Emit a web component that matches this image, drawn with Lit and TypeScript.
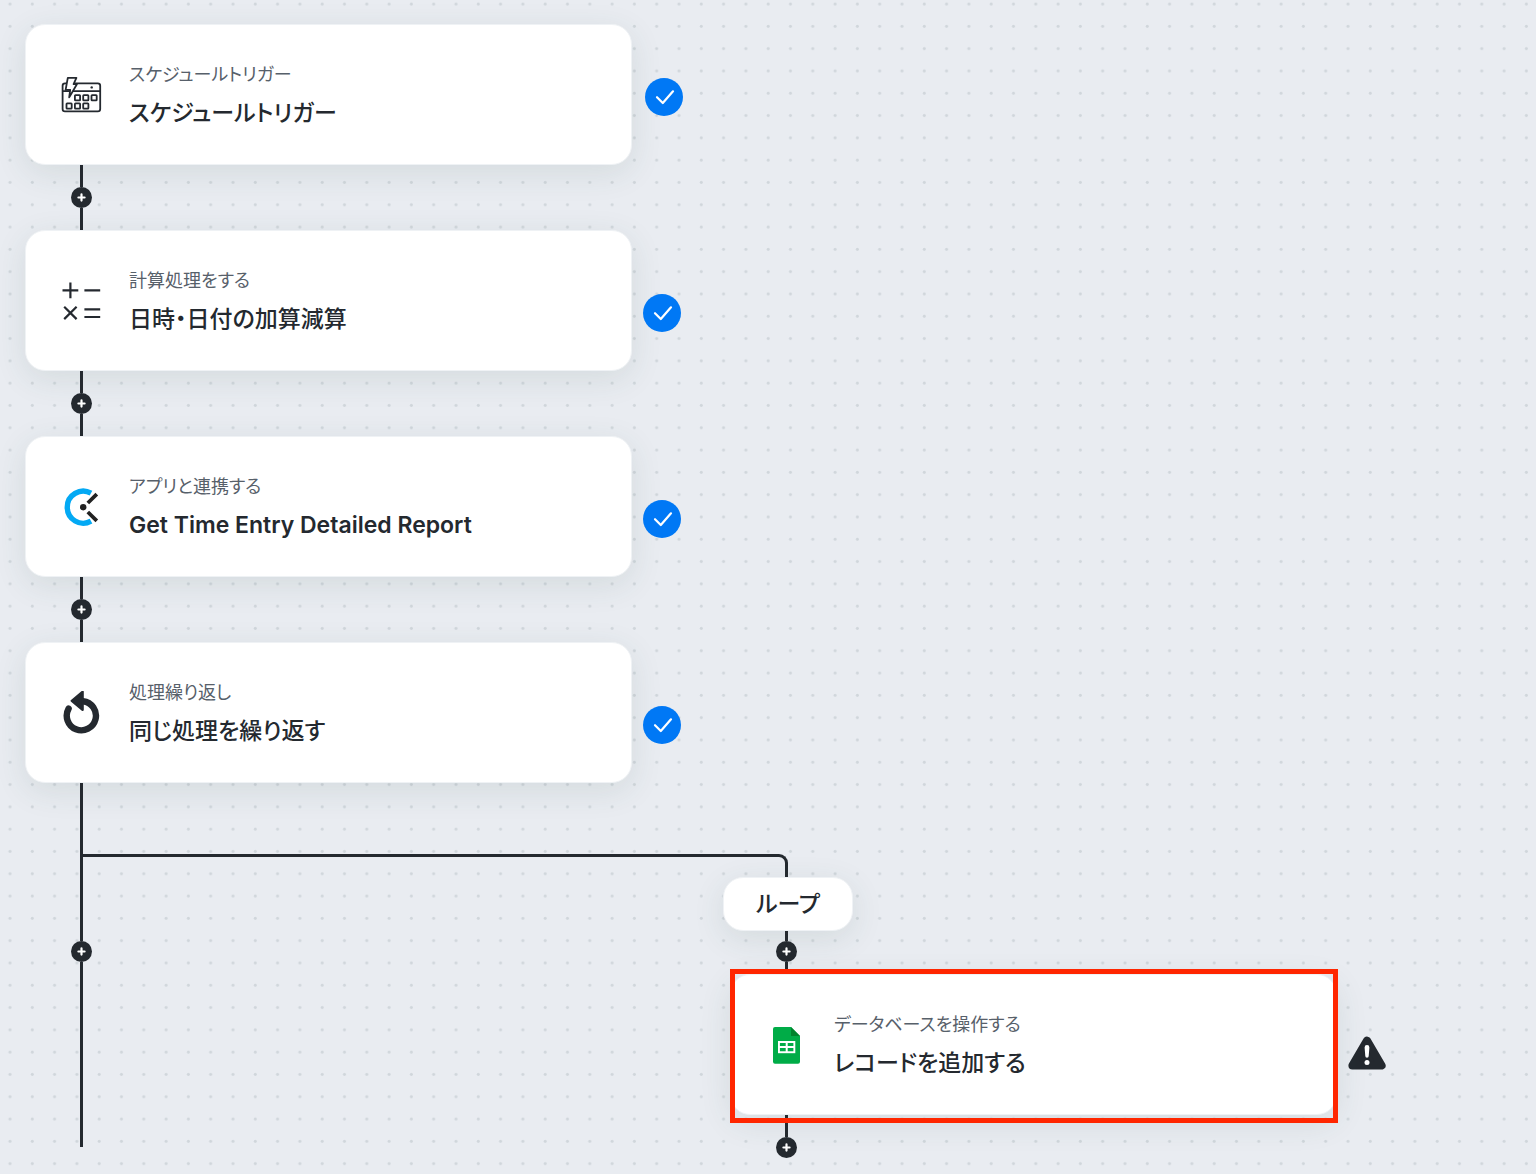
import { LitElement, html, css, svg, nothing, type TemplateResult } from "lit";
import { customElement, property } from "lit/decorators.js";
import { classMap } from "lit/directives/class-map.js";

type IconName = "calendar" | "math" | "clock" | "repeat" | "sheet";

const icons: Record<IconName, TemplateResult> = {
  calendar: svg`
    <g fill="none" stroke="#24292f" stroke-width="1.8" stroke-linejoin="round">
      <rect x="3.6" y="10.4" width="37.6" height="28" rx="2.4" />
      <path d="M3.6 18.2H41.2" />
      <rect x="15.9" y="22.1" width="5.2" height="5.2" rx=".6" />
      <rect x="24.2" y="22.1" width="5.2" height="5.2" rx=".6" />
      <rect x="32.5" y="22.1" width="5.2" height="5.2" rx=".6" />
      <rect x="7.5" y="30.4" width="5.2" height="5.2" rx=".6" />
      <rect x="15.9" y="30.4" width="5.2" height="5.2" rx=".6" />
      <rect x="24.2" y="30.4" width="5.2" height="5.2" rx=".6" />
      <path fill="#fff" d="M8.8 4.8H17.4L14.6 11.2H17.9L10.2 24.4L11.2 16.9H6.6Z" />
    </g>
    <circle cx="32.7" cy="14.4" r="1.2" fill="#24292f" />`,
  math: svg`
    <path fill="none" stroke="#24292f" stroke-width="2.2"
      d="M3.5 11.3H19.3M11.4 3.4V19.2M25.4 11.3H41.2M5.2 27.7L17.6 40.1M17.6 27.7L5.2 40.1M25.4 30.3H41.2M25.4 38H41.2" />`,
  clock: svg`
    <path fill="none" stroke="#03a9f4" stroke-width="5.4" d="M32 8.2A16 16 0 1 0 32 36.2" />
    <circle cx="24.2" cy="22.3" r="3.2" fill="#222" />
    <path stroke="#222" stroke-width="3.8" d="M28.8 18L37.8 9.2M28.8 27L37.8 35.8" />`,
  repeat: svg`
    <path fill="none" stroke="#24292f" stroke-width="6.4" stroke-linecap="round"
      d="M9.6 17.6A14.6 14.6 0 1 0 24 10.2" />
    <path fill="#24292f" stroke="#24292f" stroke-width="2.4" stroke-linejoin="round"
      d="M12.8 9.8L23.6 0.8V18.8Z" />`,
  sheet: svg`
    <path fill="#00ac47" d="M11 4H27L36 13V38.8A2 2 0 0 1 34 40.8H11A2 2 0 0 1 9 38.8V6A2 2 0 0 1 11 4Z" />
    <path fill="#00832d" d="M27 4L36 13H27Z" />
    <path fill="#fff" d="M14 18H31.3V30.2H14Z" />
    <path fill="#00ac47" d="M15.9 19.9H21.7V23.1H15.9ZM23.7 19.9H29.4V23.1H23.7ZM15.9 25H21.7V28.3H15.9ZM23.7 25H29.4V28.3H23.7Z" />`,
};

@customElement("flow-card")
class FlowCard extends LitElement {
  @property() icon: IconName = "calendar";
  @property() kind = "";
  @property() name = "";

  static styles = css`
    :host {
      display: block;
      width: 607px;
    }
    .card {
      box-sizing: border-box;
      min-height: 141px;
      display: flex;
      align-items: center;
      gap: 26px;
      padding: 0 33px;
      border: 1px solid #eff2f5;
      border-radius: 20px;
      background: #fff;
      box-shadow: 0 8px 32px rgba(50, 80, 70, 0.11);
    }
    .icon {
      flex: none;
      width: 44px;
      height: 44px;
    }
    .text {
      display: flex;
      flex-direction: column;
      gap: 8px;
    }
    .kind,
    .name {
      margin: 0;
    }
    .kind {
      font-size: 18px;
      line-height: 28px;
      color: #57606a;
    }
    .name {
      font-size: 23px;
      line-height: 32px;
      font-weight: 500;
      color: #24292f;
    }
    .name:lang(en) {
      font-weight: 600;
    }
  `;

  render() {
    return html`
      <article class="card">
        <svg class="icon" viewBox="0 0 44 44" aria-hidden="true">${icons[this.icon]}</svg>
        <div class="text">
          <p class="kind">${this.kind}</p>
          <h2 class="name" lang=${/^[\x20-\x7e]+$/.test(this.name) ? "en" : "ja"}>${this.name}</h2>
        </div>
      </article>
    `;
  }
}

@customElement("add-button")
class AddButton extends LitElement {
  static styles = css`
    :host {
      display: block;
      width: 21px;
      height: 21px;
    }
    .add {
      display: block;
      width: 21px;
      height: 21px;
      padding: 0;
      border: 0;
      border-radius: 50%;
      background: #24292f;
      cursor: pointer;
    }
    .glyph {
      display: block;
      width: 21px;
      height: 21px;
    }
  `;

  render() {
    return html`
      <button class="add" type="button" aria-label="ステップを追加">
        <svg class="glyph" viewBox="0 0 21 21" aria-hidden="true">
          <path stroke="#fff" stroke-width="2.2" stroke-linecap="round" d="M7.4 10.5H13.6M10.5 7.4V13.6" />
        </svg>
      </button>
    `;
  }
}

interface Step {
  icon: IconName;
  kind: string;
  name: string;
}

const steps: Step[] = [
  { icon: "calendar", kind: "スケジュールトリガー", name: "スケジュールトリガー" },
  { icon: "math", kind: "計算処理をする", name: "日時・日付の加算減算" },
  { icon: "clock", kind: "アプリと連携する", name: "Get Time Entry Detailed Report" },
  { icon: "repeat", kind: "処理繰り返し", name: "同じ処理を繰り返す" },
];

@customElement("app-root")
class AppRoot extends LitElement {
  static styles = css`
    :host {
      display: block;
      font-family: Inter, "Noto Sans CJK JP", sans-serif;
      font-feature-settings: "palt";
    }
    .canvas {
      position: relative;
      box-sizing: border-box;
      min-height: 100vh;
      padding: 24px 25px 16px;
      overflow: hidden;
      background: #e9ecf1;
    }
    .dots {
      position: absolute;
      inset: 0;
      width: 100%;
      height: 100%;
    }
    .flow {
      position: relative;
    }
    .row {
      display: flex;
      align-items: center;
      gap: 11px;
    }
    .row.trigger {
      gap: 13px;
    }
    .done {
      flex: none;
      width: 38px;
      height: 38px;
      margin-top: 24px;
    }
    .trigger .done {
      margin-top: 4px;
    }
    .warning {
      flex: none;
      width: 38px;
      height: 34px;
      margin-top: 16px;
    }
    .link {
      position: relative;
      display: flex;
      flex-direction: column;
      align-items: center;
      width: 21px;
      margin-left: 46px;
    }
    .line {
      width: 3px;
      height: 22px;
      background: #24292f;
    }
    .line.tall {
      height: 158px;
    }
    .line.tail {
      height: 185px;
    }
    .line.short {
      height: 10px;
    }
    .line.entry {
      height: 12px;
    }
    .split {
      display: grid;
      grid-template-columns: 705px 1fr;
    }
    .trunk {
      grid-area: 1 / 1 / 3 / 2;
      align-self: start;
    }
    .elbow {
      grid-area: 1 / 1 / 2 / 3;
      box-sizing: border-box;
      width: 708px;
      height: 23px;
      margin: 71px 0 0 55px;
      border: solid #24292f;
      border-width: 3px 3px 0 0;
      border-top-right-radius: 9px;
    }
    .branch {
      grid-area: 2 / 2 / 3 / 3;
    }
    .label {
      position: relative;
      box-sizing: border-box;
      width: 130px;
      margin: 0 0 0 -7px;
      padding: 10px 0;
      border: 1px solid #eff2f5;
      border-radius: 20px;
      background: #fff;
      box-shadow: 0 8px 32px rgba(50, 80, 70, 0.11);
      font-size: 23px;
      line-height: 32px;
      font-weight: 500;
      text-align: center;
      color: #24292f;
    }
    .marked {
      position: relative;
      z-index: 1;
    }
    .marked::after {
      content: "";
      position: absolute;
      inset: -5px -1px -8px 0;
      border: 5px solid #ff2600;
      pointer-events: none;
    }
  `;

  private renderDone() {
    return html`
      <svg class="done" viewBox="0 0 38 38" role="img" aria-label="設定済み">
        <circle cx="19" cy="19" r="19" fill="#0078f5" />
        <path fill="none" stroke="#fff" stroke-width="2.2" stroke-linecap="round" stroke-linejoin="round"
          d="M12 19.2L17.8 25L28 13.3" />
      </svg>
    `;
  }

  private renderStep(step: Step, index: number) {
    return html`
      <div class=${classMap({ row: true, trigger: index === 0 })}>
        <flow-card .icon=${step.icon} .kind=${step.kind} .name=${step.name}></flow-card>
        ${this.renderDone()}
      </div>
      ${index < steps.length - 1
        ? html`<div class="link">
            <div class="line"></div>
            <add-button></add-button>
            <div class="line"></div>
          </div>`
        : nothing}
    `;
  }

  render() {
    return html`
      <main class="canvas">
        <svg class="dots" aria-hidden="true">
          <defs>
            <pattern id="grid" width="223" height="223" patternUnits="userSpaceOnUse"
              patternTransform="translate(-1 -7) scale(.1)">
              <circle cx="110" cy="110" r="15" fill="#d0d6db" />
            </pattern>
          </defs>
          <rect width="100%" height="100%" fill="url(#grid)" />
        </svg>
        <div class="flow">
          ${steps.map((step, index) => this.renderStep(step, index))}
          <div class="split">
            <div class="link trunk">
              <div class="line tall"></div>
              <add-button></add-button>
              <div class="line tail"></div>
            </div>
            <div class="elbow"></div>
            <div class="branch">
              <p class="label">ループ</p>
              <div class="link">
                <div class="line short"></div>
                <add-button></add-button>
                <div class="line entry"></div>
              </div>
              <div class="row">
                <div class="marked">
                  <flow-card .icon=${"sheet"} .kind=${"データベースを操作する"} .name=${"レコードを追加する"}></flow-card>
                </div>
                <svg class="warning" viewBox="0 0 38 34" role="img" aria-label="要確認">
                  <path fill="#24292f" stroke="#24292f" stroke-width="8" stroke-linejoin="round" d="M19 4.6L33.6 29.6H4.4Z" />
                  <path fill="#fff" d="M16.6 11.5A2.4 2.4 0 0 1 21.4 11.5L20.7 20A1.7 1.7 0 0 1 17.3 20Z" />
                  <circle cx="19" cy="26.4" r="2.5" fill="#fff" />
                </svg>
              </div>
              <div class="link">
                <div class="line"></div>
                <add-button></add-button>
              </div>
            </div>
          </div>
        </div>
      </main>
    `;
  }
}
